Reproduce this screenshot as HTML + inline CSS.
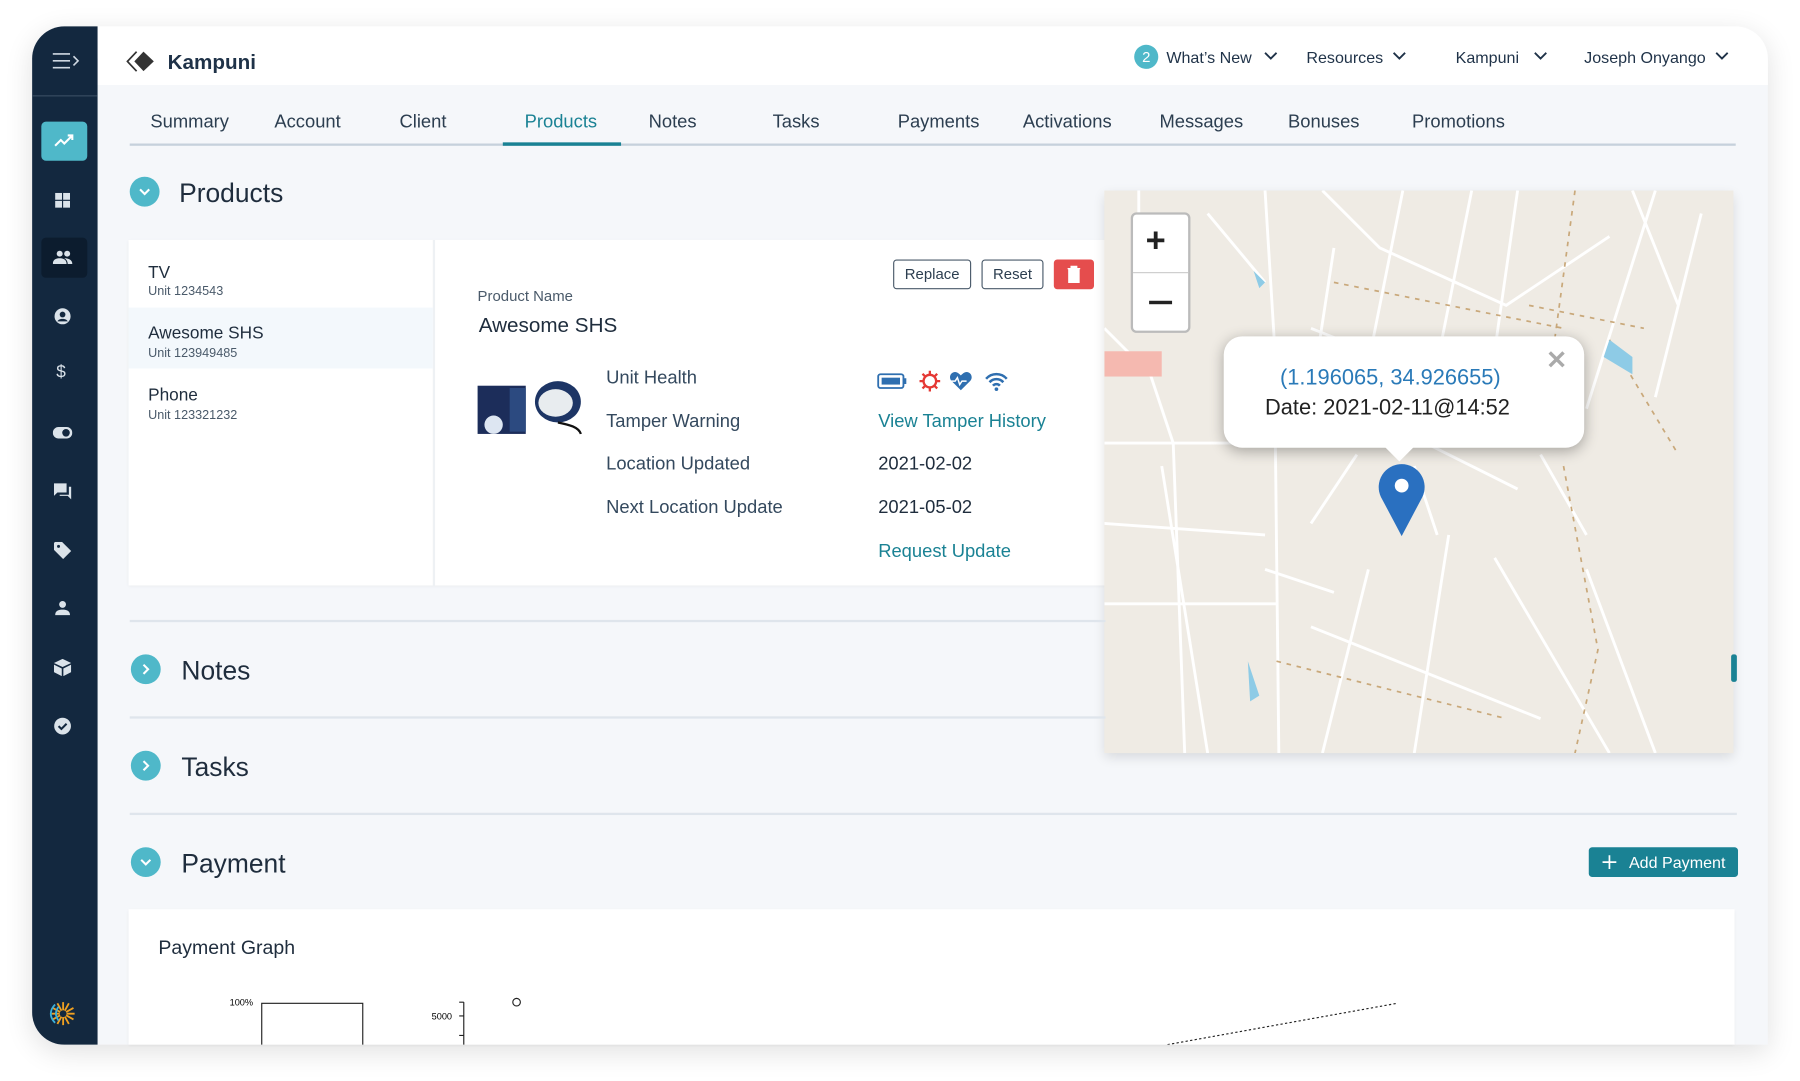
<!DOCTYPE html>
<html><head><meta charset="utf-8"><style>
*{box-sizing:border-box;margin:0;padding:0}
html,body{width:1800px;height:1081px;overflow:hidden;background:#fff;font-family:"Liberation Sans",sans-serif}
#s{position:absolute;left:0;top:0;width:1568px;height:942px;transform:scale(1.14796);transform-origin:0 0}
.a{position:absolute;white-space:nowrap}
.card{position:absolute;left:28px;top:23px;width:1512px;height:887px;border-radius:28px 28px 0 28px;overflow:hidden;background:#f5f7fa;box-shadow:0 6px 24px rgba(0,0,0,.12)}
.side{position:absolute;left:28px;top:23px;width:57px;height:887px;background:#13283f;border-radius:28px 0 0 28px}
.tab{position:absolute;top:98px;font-size:16px;color:#2c3e50}
.lbl{position:absolute;left:528px;font-size:16px;color:#34495e}
.val{position:absolute;left:765px;font-size:16px;color:#1f2d3d}
.circ{position:absolute;width:26px;height:26px;border-radius:50%;background:#4fb8c9}
.sec{position:absolute;font-size:23px;color:#1f2d3d}
.line{position:absolute;left:113px;height:2px;background:#dfe5ec}
.btn{position:absolute;top:226px;height:26px;border:1px solid #4a5a6a;border-radius:3px;font-size:13px;color:#2c3e50;text-align:center;line-height:24px;background:#fff}
</style></head><body><div id="s">
<div class="card"></div>
<div class="a" style="left:85px;top:23px;width:1455px;height:51px;background:#fff;border-radius:0 28px 0 0"></div>
<div class="side"></div>
<svg class="a" style="left:44px;top:44px" width="26" height="18"><g stroke="#cfd8e2" stroke-width="1.4" fill="none"><path d="M2 3h15M2 9h15M2 15h15M20 5l4 4-4 4"/></g></svg>
<div class="a" style="left:28px;top:83px;width:57px;height:1px;background:#3a4d63"></div>
<div class="a" style="left:36px;top:106px;width:40px;height:34px;border-radius:4px;background:#4fb8c9"></div>
<svg class="a" style="left:47px;top:116px" width="18" height="14"><path d="M1 11l5-5 3 3 7-7M12 2h4v4" stroke="#fff" stroke-width="1.8" fill="none"/></svg>
<svg class="a" style="left:48px;top:168px" width="13" height="13"><g fill="#dbe3ea"><rect width="6" height="6"/><rect x="7" width="6" height="6"/><rect y="7" width="6" height="6"/><rect x="7" y="7" width="6" height="6"/></g></svg>
<div class="a" style="left:36px;top:207px;width:40px;height:35px;border-radius:4px;background:#0c1c2e"></div>
<svg class="a" style="left:46px;top:218px" width="18" height="12"><g fill="#dbe3ea"><circle cx="6" cy="3" r="2.6"/><circle cx="12.5" cy="3" r="2.6"/><path d="M0 12c0-4 3-5 6-5s6 1 6 5zM10 7c3 0 7 1 7 5h-4c0-2-1-4-3-5z"/></g></svg>
<svg class="a" style="left:47px;top:268px" width="15" height="15"><circle cx="7.5" cy="7.5" r="7" fill="#dbe3ea"/><circle cx="7.5" cy="6" r="2.5" fill="#13283f"/><path d="M3 12c1-3 8-3 9 0" fill="#13283f"/></svg>
<div class="a" style="left:49px;top:316px;color:#dbe3ea;font-size:15px">$</div>
<svg class="a" style="left:46px;top:372px" width="17" height="10"><rect width="17" height="10" rx="5" fill="#dbe3ea"/><circle cx="11.5" cy="5" r="3.3" fill="#13283f"/></svg>
<svg class="a" style="left:47px;top:421px" width="16" height="15"><path d="M0 0h11v8H3L0 11z" fill="#dbe3ea"/><path d="M13 3h2v11l-3-3H5V10h8z" fill="#dbe3ea"/></svg>
<svg class="a" style="left:47px;top:472px" width="16" height="15"><path d="M0 1v6l8 8 7-7-8-8H1z" fill="#dbe3ea"/><circle cx="4" cy="4" r="1.3" fill="#13283f"/></svg>
<svg class="a" style="left:48px;top:523px" width="13" height="13"><circle cx="6.5" cy="3.5" r="3" fill="#dbe3ea"/><path d="M0 13c0-4 3-5 6.5-5S13 9 13 13z" fill="#dbe3ea"/></svg>
<svg class="a" style="left:47px;top:574px" width="15" height="15"><path d="M7.5 0L15 3.5 7.5 7 0 3.5z" fill="#dbe3ea"/><path d="M0 5l6.8 3.3V15L0 11.5zM15 5L8.2 8.3V15L15 11.5z" fill="#dbe3ea"/></svg>
<svg class="a" style="left:47px;top:625px" width="15" height="15"><circle cx="7.5" cy="7.5" r="7.3" fill="#dbe3ea"/><path d="M4 7.5l2.5 2.5L11 5.5" stroke="#13283f" stroke-width="1.8" fill="none"/></svg>
<svg class="a" style="left:43px;top:871px" width="24" height="24"><g stroke-width="1.6"><path d="M12 2v20M7 3l10 18M3 7l18 10M2 12h20M3 17l18-10M7 21L17 3" stroke="#f0a020"/><path d="M5 4c-5 5-5 11 0 16M8 6c-3 4-3 8 0 12" stroke="#3bb0d8" fill="none"/></g><circle cx="12" cy="12" r="3" fill="#13283f"/></svg>
<svg class="a" style="left:110px;top:44px" width="26" height="19"><path d="M9 1L1 9.5 9 18" stroke="#333" stroke-width="1.5" fill="none"/><path d="M15 1l9 8.5-9 8.5-8-8.5z" fill="#333"/></svg>
<div class="a" style="left:146px;top:44px;font-size:18px;font-weight:bold;color:#1f3248">Kampuni</div>
<div class="a" style="left:988px;top:39px;width:21px;height:21px;border-radius:50%;background:#4fb8c9;color:#fff;font-size:13px;text-align:center;line-height:21px">2</div>
<div class="a" style="left:1016px;top:42px;font-size:14px;color:#1f3248">What’s New</div>
<div class="a" style="left:1138px;top:42px;font-size:14px;color:#1f3248">Resources</div>
<div class="a" style="left:1268px;top:42px;font-size:14px;color:#1f3248">Kampuni</div>
<div class="a" style="left:1380px;top:42px;font-size:14px;color:#1f3248">Joseph Onyango</div>
<svg class="a" style="left:0;top:0" width="1568" height="80"><g stroke="#1f3248" stroke-width="1.6" fill="none"><path d="M1102 46l5 5 5-5M1214 46l5 5 5-5M1337 46l5 5 5-5M1495 46l5 5 5-5"/></g></svg>
<div class="tab" style="left:131px">Summary</div><div class="tab" style="left:239px">Account</div><div class="tab" style="left:348px">Client</div><div class="tab" style="left:457px;color:#1a8294">Products</div><div class="tab" style="left:565px">Notes</div><div class="tab" style="left:673px">Tasks</div><div class="tab" style="left:782px">Payments</div><div class="tab" style="left:891px">Activations</div><div class="tab" style="left:1010px">Messages</div><div class="tab" style="left:1122px">Bonuses</div><div class="tab" style="left:1230px">Promotions</div>
<div class="a" style="left:113px;top:125px;width:1399px;height:2px;background:#c6d1dc"></div>
<div class="a" style="left:438px;top:124px;width:103px;height:3px;background:#1a8294"></div>
<div class="circ" style="left:113px;top:154px"></div>
<svg class="a" style="left:113px;top:154px" width="26" height="26"><path d="M9 11l4 4 4-4" stroke="#fff" stroke-width="1.8" fill="none"/></svg>
<div class="sec" style="left:156px;top:155px">Products</div>
<div class="a" style="left:112px;top:209px;width:851px;height:301px;background:#fff;box-shadow:0 1px 3px rgba(0,0,0,.05)"></div>
<div class="a" style="left:377px;top:209px;width:2px;height:301px;background:#eef1f4"></div>
<div class="a" style="left:112px;top:268px;width:265px;height:53px;background:#f3f8fc"></div>
<div class="a" style="left:129px;top:229px;font-size:15px;color:#1f2d3d">TV</div>
<div class="a" style="left:129px;top:248px;font-size:11px;color:#4a5a6a">Unit 1234543</div>
<div class="a" style="left:129px;top:282px;font-size:15px;color:#1f2d3d">Awesome SHS</div>
<div class="a" style="left:129px;top:302px;font-size:11px;color:#4a5a6a">Unit 123949485</div>
<div class="a" style="left:129px;top:336px;font-size:15px;color:#1f2d3d">Phone</div>
<div class="a" style="left:129px;top:356px;font-size:11px;color:#4a5a6a">Unit 123321232</div>
<div class="a" style="left:416px;top:250px;font-size:13px;color:#4a5a6a">Product Name</div>
<div class="a" style="left:417px;top:273px;font-size:18px;color:#1f2d3d">Awesome SHS</div>
<svg class="a" style="left:416px;top:328px" width="92" height="52"><rect x="0" y="8" width="42" height="42" fill="#1c2d5a"/><rect x="28" y="10" width="14" height="38" fill="#2c4a80"/><ellipse cx="70" cy="22" rx="20" ry="18" fill="#1d3565"/><ellipse cx="68" cy="23" rx="15" ry="12" fill="#e8ecef"/><circle cx="14" cy="42" r="8" fill="#dde6f2"/><path d="M70 40c10 2 18 4 20 10" stroke="#111" stroke-width="2" fill="none"/></svg>
<div class="btn" style="left:778px;width:68px">Replace</div>
<div class="btn" style="left:855px;width:54px">Reset</div>
<div class="a" style="left:918px;top:226px;width:35px;height:26px;background:#e54d4d;border-radius:3px"></div>
<svg class="a" style="left:929px;top:231px" width="13" height="16"><path d="M1 3h11M4 3V1h5v2M2 4h9v11H2z" fill="#fff" stroke="#fff" stroke-width="1"/></svg>
<div class="lbl" style="top:321px">Unit Health</div>
<div class="lbl" style="top:359px">Tamper Warning</div>
<div class="lbl" style="top:396px">Location Updated</div>
<div class="lbl" style="top:434px">Next Location Update</div>
<svg class="a" style="left:764px;top:321px" width="120" height="22"><rect x="1" y="5" width="22" height="12" rx="2" fill="none" stroke="#2f6fb0" stroke-width="1.6"/><rect x="4" y="8" width="16" height="6" fill="#2f6fb0"/><rect x="23.5" y="8.5" width="2" height="5" fill="#2f6fb0"/>
<g transform="translate(46 11)"><circle r="5.5" fill="none" stroke="#e53935" stroke-width="2"/><g stroke="#e53935" stroke-width="2"><path d="M0-9v3M0 6v3M-9 0h3M6 0h3M-6.4-6.4l2 2M4.4 4.4l2 2M-6.4 6.4l2-2M4.4-4.4l2-2"/></g></g>
<path d="M73 19l-8-8c-3-3-1-8 3-8 2 0 4 2 5 3 1-1 3-3 5-3 4 0 6 5 3 8z" fill="#2f6fb0"/><path d="M64 11h4l2-3 2 6 2-3h4" stroke="#fff" stroke-width="1.3" fill="none"/>
<g fill="none" stroke="#2f6fb0" stroke-width="2.2"><path d="M95 9a12 12 0 0 1 18 0M98 12a8 8 0 0 1 12 0M101 15a4 4 0 0 1 6 0"/></g><circle cx="104" cy="18" r="1.6" fill="#2f6fb0"/></svg>
<div class="val" style="top:359px;color:#1a8294">View Tamper History</div>
<div class="val" style="top:396px">2021-02-02</div>
<div class="val" style="top:434px">2021-05-02</div>
<div class="val" style="top:472px;color:#1a8294">Request Update</div>
<div class="a" style="left:962px;top:166px;width:548px;height:490px;background:#efebe4;overflow:hidden;box-shadow:0 4px 10px rgba(0,0,0,.12)">
<svg width="548" height="490" style="position:absolute;left:0;top:0"><g stroke="#fff" stroke-width="2.5" fill="none">
<path d="M140 0l8 130M148 130l4 360M0 120l40 40 20 60 10 270M30 0v120M90 20l50 60M190 0l50 50 110 50 90-60M200 50l-20 130M260 0l-30 150M320 0l-30 150M360 0l-20 140M460 0l40 100M520 20l-40 160M180 120l200 80M200 180l160 80M0 220h140M0 290l140 10M0 360h150M230 330l-40 160M300 300l-30 190M340 320l100 170M420 330l60 160M180 380l200 80M480 0l-60 190M50 240l40 250M220 230l-40 60M270 240l20 60M380 230l40 70M140 330l60 20"/></g>
<g stroke="#c9a87a" stroke-width="1.5" stroke-dasharray="4 5" fill="none"><path d="M410 0l-30 220M370 100l100 20M200 80l200 40M440 130l60 100M400 240l30 160 -20 90M150 410l200 50"/></g>
<rect x="0" y="140" width="50" height="22" fill="#f5b9b0"/><path d="M130 70l10 10-5 5z" fill="#8ecbe6"/><path d="M440 130l20 15 0 15-25-15z" fill="#8ecbe6"/><path d="M125 410l10 30-8 5z" fill="#8ecbe6"/></svg>
<div class="a" style="left:23px;top:19px;width:52px;height:105px;background:#fff;border:2px solid #bbb;border-radius:5px"></div>
<div class="a" style="left:25px;top:71px;width:48px;height:1px;background:#ccc"></div>
<div class="a" style="left:36px;top:26px;font-size:30px;font-weight:bold;color:#222;line-height:36px">+</div>
<div class="a" style="left:39px;top:96px;width:20px;height:3px;background:#222"></div>
<div class="a" style="left:104px;top:127px;width:314px;height:97px;background:#fff;border-radius:16px;box-shadow:0 3px 12px rgba(0,0,0,.3)"></div>
<div class="a" style="left:243px;top:222px;width:0;height:0;border-left:14px solid transparent;border-right:14px solid transparent;border-top:14px solid #fff"></div>
<svg class="a" style="left:386px;top:139px" width="16" height="16"><path d="M2 2l12 12M14 2L2 14" stroke="#aaa" stroke-width="3"/></svg>
<div class="a" style="left:153px;top:153px;font-size:19px;color:#2a7ab8">(1.196065, 34.926655)</div>
<div class="a" style="left:140px;top:179px;font-size:19px;color:#222">Date: 2021-02-11@14:52</div>
<svg class="a" style="left:237px;top:237px" width="44" height="66"><path d="M22 64L4 30A20 20 0 1 1 40 30z" fill="#2a70c0"/><circle cx="22" cy="20" r="6" fill="#fff"/></svg>
</div>
<div class="a" style="left:1508px;top:570px;width:5px;height:24px;background:#1a8294;border-radius:2px"></div>
<div class="line" style="top:540px;width:850px"></div>
<div class="circ" style="left:114px;top:570px"></div>
<svg class="a" style="left:114px;top:570px" width="26" height="26"><path d="M11 9l4 4-4 4" stroke="#fff" stroke-width="1.8" fill="none"/></svg>
<div class="sec" style="left:158px;top:571px">Notes</div>
<div class="line" style="top:624px;width:850px"></div>
<div class="circ" style="left:114px;top:654px"></div>
<svg class="a" style="left:114px;top:654px" width="26" height="26"><path d="M11 9l4 4-4 4" stroke="#fff" stroke-width="1.8" fill="none"/></svg>
<div class="sec" style="left:158px;top:655px">Tasks</div>
<div class="line" style="top:708px;width:1400px"></div>
<div class="circ" style="left:114px;top:738px"></div>
<svg class="a" style="left:114px;top:738px" width="26" height="26"><path d="M9 11l4 4 4-4" stroke="#fff" stroke-width="1.8" fill="none"/></svg>
<div class="sec" style="left:158px;top:739px">Payment</div>
<div class="a" style="left:1384px;top:738px;width:130px;height:26px;background:#1a8294;border-radius:3px;color:#fff;font-size:14px;line-height:26px;padding-left:35px">Add Payment</div>
<svg class="a" style="left:1395px;top:744px" width="14" height="14"><path d="M7 1v12M1 7h12" stroke="#fff" stroke-width="1.5"/></svg>
<div class="a" style="left:112px;top:792px;width:1399px;height:118px;background:#fff;box-shadow:0 1px 3px rgba(0,0,0,.06)"></div>
<div class="a" style="left:138px;top:816px;font-size:17px;color:#1f2d3d">Payment Graph</div>
<svg class="a" style="left:112px;top:860px" width="1200" height="50"><rect x="116" y="14" width="88" height="40" fill="none" stroke="#222" stroke-width="1"/><text x="88" y="16" font-size="8" font-family="Liberation Sans">100%</text><text x="264" y="28" font-size="8" font-family="Liberation Sans">5000</text><path d="M292 13v40M288 13h4M288 25h4M288 42h4" stroke="#222" fill="none"/><circle cx="338" cy="13" r="3.3" fill="none" stroke="#222"/><path d="M905 50l200-36" stroke="#222" stroke-dasharray="2 2"/></svg>
</div></body></html>
